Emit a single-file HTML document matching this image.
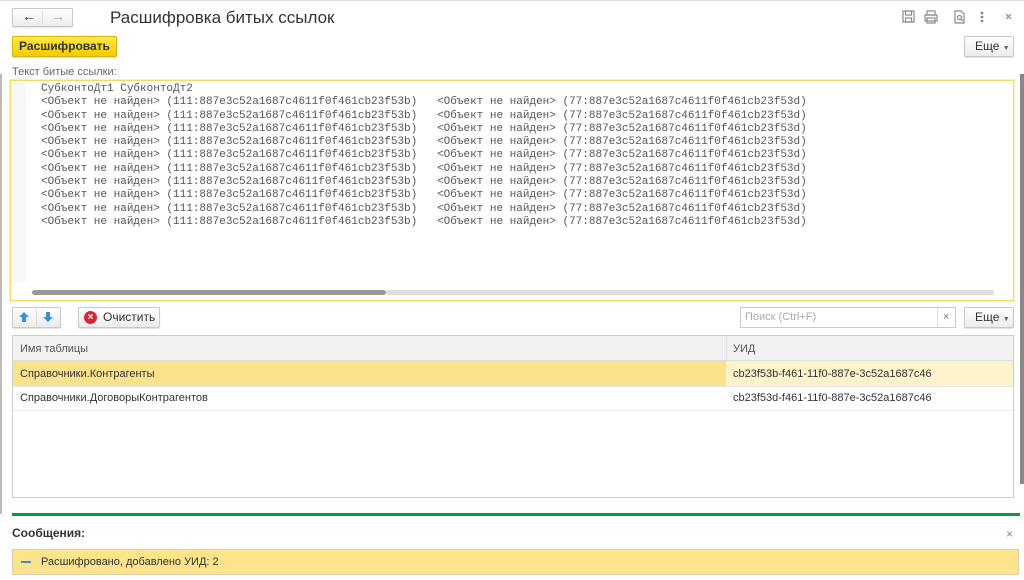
<!DOCTYPE html>
<html><head><meta charset="utf-8"><style>
*{box-sizing:border-box;margin:0;padding:0}
body{width:1024px;height:580px;background:#fff;font-family:"Liberation Sans",sans-serif;color:#333;position:relative;overflow:hidden;font-size:11px}
.a{position:absolute}
.btn{position:absolute;border:1px solid #c8c8c8;border-radius:2px;background:linear-gradient(#fff,#ececec);box-shadow:0 1px 1px rgba(0,0,0,.12)}
.mono{font-family:"Liberation Mono",monospace;font-size:11px;color:#555;white-space:pre;line-height:13.3px}
</style></head><body>
<div class="a" style="left:0;top:0;width:1024px;height:1px;background:#ddd"></div>
<div class="btn" style="left:12px;top:8px;width:61px;height:19px"></div>
<div class="a" style="left:42px;top:10px;width:1px;height:15px;background:#ddd"></div>
<div class="a" style="left:22px;top:8px;font-size:14px;color:#444;font-weight:bold">←</div>
<div class="a" style="left:51px;top:8px;font-size:14px;color:#aaa;font-weight:bold">→</div>
<div class="a" style="left:110px;top:8px;font-size:17px;color:#333">Расшифровка битых ссылок</div>
<svg class="a" style="left:900px;top:9px" width="120" height="16" viewBox="0 0 120 16" fill="none" stroke="#888" stroke-width="1.2">
<rect x="3" y="2" width="11" height="11"/><rect x="5.5" y="2" width="6" height="4"/><rect x="5.5" y="9" width="6" height="4"/>
<rect x="27" y="2" width="8" height="4"/><rect x="25" y="6" width="12" height="6"/><rect x="27" y="9" width="8" height="5"/>
<path d="M55 2h6l3 3v9h-9z"/><circle cx="59.5" cy="8.5" r="2"/><path d="M61 10l2 2"/>
<circle cx="82" cy="4" r=".8" fill="#888"/><circle cx="82" cy="8" r=".8" fill="#888"/><circle cx="82" cy="12" r=".8" fill="#888"/>
<path d="M106 5l5 5M111 5l-5 5"/></svg>
<div class="a" style="left:12px;top:36px;width:105px;height:21px;background:linear-gradient(#ffe84a,#f3cc00);border:1px solid #d9b400;border-radius:2px;box-shadow:0 1px 1px rgba(0,0,0,.15);font-weight:bold;font-size:12px;color:#333;text-align:center;line-height:19px">Расшифровать</div>
<div class="btn" style="left:964px;top:36px;width:50px;height:21px;font-size:12px;line-height:19px;padding-left:10px">Еще <span style="font-size:7px;color:#666">▼</span></div>
<div class="a" style="left:12px;top:66px;color:#666;font-size:11px">Текст битые ссылки:</div>
<div class="a" style="left:10px;top:80px;width:1004px;height:221px;border:1px solid #f5d866;box-shadow:0 0 0 1px #fbeeb8"></div>
<div class="a" style="left:12px;top:82px;width:14px;height:200px;background:#f8f8f8"></div>
<div class="a mono" style="left:41px;top:83px">СубконтоДт1 СубконтоДт2
<span>&lt;Объект не найден&gt; (111:887e3c52a1687c4611f0f461cb23f53b)   &lt;Объект не найден&gt; (77:887e3c52a1687c4611f0f461cb23f53d)
&lt;Объект не найден&gt; (111:887e3c52a1687c4611f0f461cb23f53b)   &lt;Объект не найден&gt; (77:887e3c52a1687c4611f0f461cb23f53d)
&lt;Объект не найден&gt; (111:887e3c52a1687c4611f0f461cb23f53b)   &lt;Объект не найден&gt; (77:887e3c52a1687c4611f0f461cb23f53d)
&lt;Объект не найден&gt; (111:887e3c52a1687c4611f0f461cb23f53b)   &lt;Объект не найден&gt; (77:887e3c52a1687c4611f0f461cb23f53d)
&lt;Объект не найден&gt; (111:887e3c52a1687c4611f0f461cb23f53b)   &lt;Объект не найден&gt; (77:887e3c52a1687c4611f0f461cb23f53d)
&lt;Объект не найден&gt; (111:887e3c52a1687c4611f0f461cb23f53b)   &lt;Объект не найден&gt; (77:887e3c52a1687c4611f0f461cb23f53d)
&lt;Объект не найден&gt; (111:887e3c52a1687c4611f0f461cb23f53b)   &lt;Объект не найден&gt; (77:887e3c52a1687c4611f0f461cb23f53d)
&lt;Объект не найден&gt; (111:887e3c52a1687c4611f0f461cb23f53b)   &lt;Объект не найден&gt; (77:887e3c52a1687c4611f0f461cb23f53d)
&lt;Объект не найден&gt; (111:887e3c52a1687c4611f0f461cb23f53b)   &lt;Объект не найден&gt; (77:887e3c52a1687c4611f0f461cb23f53d)
&lt;Объект не найден&gt; (111:887e3c52a1687c4611f0f461cb23f53b)   &lt;Объект не найден&gt; (77:887e3c52a1687c4611f0f461cb23f53d)</span></div>
<div class="a" style="left:32px;top:290px;width:354px;height:5px;background:#999;border-radius:3px"></div>
<div class="a" style="left:386px;top:290px;width:608px;height:5px;background:#ddd;border-radius:3px"></div>
<div class="a" style="left:1020px;top:74px;width:4px;height:410px;background:#888"></div>
<div class="a" style="left:0;top:74px;width:2px;height:440px;background:#bbb"></div>
<div class="btn" style="left:12px;top:307px;width:49px;height:21px"></div>
<div class="a" style="left:36px;top:309px;width:1px;height:17px;background:#ddd"></div>
<svg class="a" style="left:17px;top:310px" width="40" height="14"><path d="M7 2l5 5h-3v5h-4v-5h-3z" fill="#3a8fd8"/><path d="M31 12l5-5h-3v-5h-4v5h-3z" fill="#3a8fd8"/></svg>
<div class="btn" style="left:78px;top:307px;width:82px;height:21px;font-size:12px;line-height:19px;padding-left:24px">Очистить</div>
<div class="a" style="left:84px;top:311px;width:13px;height:13px;border-radius:50%;background:#d8262e;color:#fff;font-size:10px;line-height:13px;text-align:center;font-weight:bold">×</div>
<div class="a" style="left:740px;top:307px;width:216px;height:21px;border:1px solid #c8c8c8;color:#aaa;font-size:11px;line-height:19px;padding-left:4px">Поиск (Ctrl+F)</div>
<div class="a" style="left:937px;top:308px;width:1px;height:19px;background:#ddd"></div>
<div class="a" style="left:943px;top:311px;color:#777;font-size:11px">×</div>
<div class="btn" style="left:964px;top:307px;width:50px;height:21px;font-size:12px;line-height:19px;padding-left:10px">Еще <span style="font-size:7px;color:#666">▼</span></div>
<div class="a" style="left:12px;top:335px;width:1002px;height:163px;border:1px solid #ccc;border-top-color:#ccc"></div>
<div class="a" style="left:13px;top:336px;width:1000px;height:25px;background:#f2f2f2;border-bottom:1px solid #ddd"></div>
<div class="a" style="left:726px;top:336px;width:1px;height:25px;background:#ddd"></div>
<div class="a" style="left:20px;top:343px;color:#555">Имя таблицы</div>
<div class="a" style="left:733px;top:343px;color:#555">УИД</div>
<div class="a" style="left:13px;top:361px;width:713px;height:25px;background:#fbe38e"></div>
<div class="a" style="left:726px;top:361px;width:287px;height:25px;background:#fdf3ca"></div>
<div class="a" style="left:13px;top:386px;width:1000px;height:1px;background:#e6e6e6"></div>
<div class="a" style="left:13px;top:410px;width:1000px;height:1px;background:#eee"></div>
<div class="a" style="left:20px;top:368px;color:#333">Справочники.Контрагенты</div>
<div class="a" style="left:733px;top:368px;color:#333">cb23f53b-f461-11f0-887e-3c52a1687c46</div>
<div class="a" style="left:20px;top:392px;color:#333">Справочники.ДоговорыКонтрагентов</div>
<div class="a" style="left:733px;top:392px;color:#333">cb23f53d-f461-11f0-887e-3c52a1687c46</div>
<div class="a" style="left:12px;top:513px;width:1008px;height:3px;background:#0a9a45"></div>
<div class="a" style="left:12px;top:526px;font-weight:bold;font-size:12px;color:#333">Сообщения:</div>
<div class="a" style="left:1006px;top:527px;color:#888;font-size:12px">×</div>
<div class="a" style="left:12px;top:549px;width:1007px;height:26px;background:#fce38c;border:1px solid #d8d0b0;line-height:24px;padding-left:28px;font-size:11px;color:#333">Расшифровано, добавлено УИД: 2</div>
<div class="a" style="left:21px;top:561px;width:10px;height:2px;background:#3a8fd8"></div>
</body></html>
